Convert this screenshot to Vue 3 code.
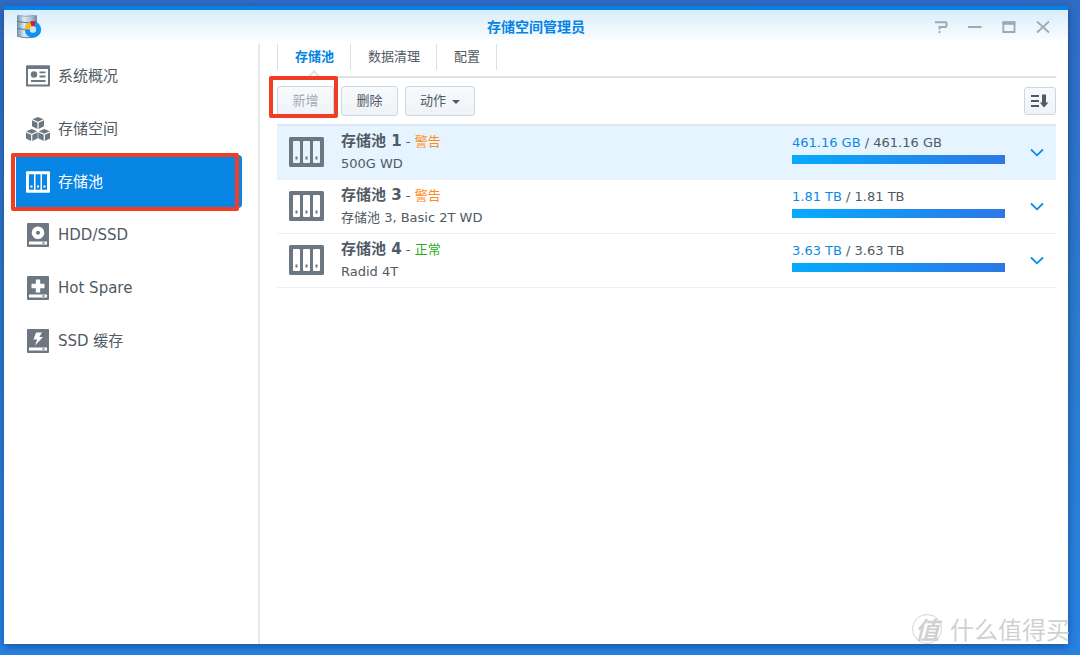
<script setup>
import { ref } from 'vue'

const nav = [
  { id: 'overview', label: '系统概况' },
  { id: 'volume', label: '存储空间' },
  { id: 'pool', label: '存储池' },
  { id: 'disk', label: 'HDD/SSD' },
  { id: 'spare', label: 'Hot Spare' },
  { id: 'cache', label: 'SSD 缓存' },
]
const current = ref('pool')

const tabs = ['存储池', '数据清理', '配置']
const tab = ref('存储池')

const pools = [
  { name: '存储池 1', status: '警告', level: 'warn', note: '500G WD', used: '461.16 GB', total: '461.16 GB', percent: 100 },
  { name: '存储池 3', status: '警告', level: 'warn', note: '存储池 3, Basic 2T WD', used: '1.81 TB', total: '1.81 TB', percent: 100 },
  { name: '存储池 4', status: '正常', level: 'ok', note: 'Radid 4T', used: '3.63 TB', total: '3.63 TB', percent: 100 },
]
const selected = ref('存储池 1')
</script>

<template>
  <div class="desktop">
    <div class="window">
      <header class="titlebar">
        <svg class="logo" viewBox="0 0 26 26" aria-hidden="true">
          <defs>
            <linearGradient id="metal" x1="0" x2="1" y1="0" y2="0">
              <stop offset="0" stop-color="#6f8fa8" />
              <stop offset="0.35" stop-color="#dcebf5" />
              <stop offset="0.7" stop-color="#a9c3d6" />
              <stop offset="1" stop-color="#68889f" />
            </linearGradient>
          </defs>
          <path d="M1 1.500Q11 -.5 21 1.500V22Q11 25.500 1 22Z" fill="url(#metal)" />
          <path d="M1 1.500Q11 3.500 21 1.500" fill="none" stroke="#8da8bb" stroke-width=".8" />
          <path d="M1 7.500Q11 10 21 7.500M1 14.500Q11 17 21 14.500" fill="none" stroke="#55758d" />
          <path d="M1 22Q11 25.500 21 22" fill="none" stroke="#6f8798" />
          <circle cx="17" cy="15.500" r="5.700" fill="none" stroke="#0b93f6" stroke-width="5" />
          <path d="M11.300 15.500A5.700 5.700 0 0 1 15 10.200" fill="none" stroke="#fcb813" stroke-width="5" />
          <path d="M15 10.200A5.700 5.700 0 0 1 19 10.200" fill="none" stroke="#e0182d" stroke-width="5" />
          <circle cx="17" cy="15.500" r="3.200" fill="#d3e0ea" />
        </svg>
        <h1>存储空间管理员</h1>
        <div class="controls">
          <button type="button" aria-label="帮助">
            <svg viewBox="0 0 14 14"><path d="M1 2.300H11.500Q12.500 2.300 12.500 3.300V6Q12.500 7 11.500 7H5.500V9.500M4.500 12H6.500" /></svg>
          </button>
          <button type="button" aria-label="最小化">
            <svg viewBox="0 0 14 14"><path d="M0 7H13.500" /></svg>
          </button>
          <button type="button" aria-label="最大化">
            <svg viewBox="0 0 14 14"><path d="M1.300 2.500V12H12.500V2.500Z" stroke-width="1.800" /><path d="M.5 3H13.400" stroke-width="3.500" /></svg>
          </button>
          <button type="button" aria-label="关闭">
            <svg viewBox="0 0 14 14"><path d="M1 1.500L13 12.500M13 1.500L1 12.500" stroke-width="1.700" /></svg>
          </button>
        </div>
      </header>

      <div class="body">
        <nav class="sidebar">
          <button
            v-for="item in nav"
            :key="item.id"
            type="button"
            class="nav-item"
            :class="{ active: current === item.id }"
            @click="current = item.id"
          >
            <svg v-if="item.id === 'overview'" viewBox="0 0 24 24">
              <path fill="currentColor" fill-rule="evenodd" d="M1 1.200H23Q24 1.200 24 2.200V21.500Q24 22.500 23 22.500H1Q0 22.500 0 21.500V2.200Q0 1.200 1 1.200ZM2 5V20.500H22V5Z" />
              <circle cx="8" cy="10.500" r="3.200" fill="currentColor" />
              <path stroke="currentColor" stroke-width="1.800" d="M13.500 8.300H19.500M13.500 12.500H19.500M5 17H19.500" />
            </svg>
            <svg v-else-if="item.id === 'volume'" viewBox="0 0 24 24">
              <g v-for="p in [[12, 0], [5.7, 12], [18.300, 12]]" :key="p[0]" :transform="`translate(${p[0]} ${p[1]})`" fill="currentColor">
                <path d="M0 0L5.500 2.300L0 4.800L-5.500 2.300Z" />
                <path d="M-6 3.300L-.6 5.800V12L-6 9.300Z" />
                <path d="M6 3.300L.6 5.800V12L6 9.300Z" />
              </g>
            </svg>
            <svg v-else-if="item.id === 'pool'" viewBox="0 0 24 24">
              <path fill="currentColor" fill-rule="evenodd" d="M1 1.300H23Q24 1.300 24 2.300V21.700Q24 22.700 23 22.700H1Q0 22.700 0 21.700V2.300Q0 1.300 1 1.300ZM3 4.300V19.700H8V4.300ZM9.500 4.300V19.700H14.500V4.300ZM16 4.300V19.700H21V4.300Z" />
              <path fill="currentColor" d="M4.500 15.500h2v2h-2zM11 15.500h2v2h-2zM17.500 15.500h2v2h-2z" />
            </svg>
            <svg v-else viewBox="0 0 24 24">
              <path fill="currentColor" d="M2 0H22Q23 0 23 1V23Q23 24 22 24H2Q1 24 1 23V1Q1 0 2 0Z" />
              <path fill="#fff" fill-rule="evenodd" d="M3 18.500H21V21.500H3ZM16.500 19.300V20.700H18.500V19.300Z" />
              <path v-if="item.id === 'disk'" fill="#fff" fill-rule="evenodd" d="M12 3.500A6.300 6.300 0 1 0 12 16.100A6.300 6.300 0 1 0 12 3.500ZM12 7.800A2 2 0 1 1 12 11.800A2 2 0 1 1 12 7.800Z" />
              <path v-else-if="item.id === 'spare'" fill="#fff" d="M9.800 3.500H14.200V7.800H18.500V12.200H14.200V16.500H9.800V12.200H5.500V7.800H9.800Z" />
              <path v-else fill="#fff" d="M10 3.500H16L13.300 8H17L9 16.500L11.200 10.500H7.500Z" />
            </svg>
            <span>{{ item.label }}</span>
          </button>
          <div class="mark mark-nav"></div>
        </nav>

        <main class="content">
          <div class="tabs" role="tablist">
            <button
              v-for="t in tabs"
              :key="t"
              type="button"
              role="tab"
              :aria-selected="tab === t"
              :class="{ active: tab === t }"
              @click="tab = t"
            >{{ t }}</button>
          </div>

          <div class="toolbar">
            <button type="button" class="btn" disabled>新增</button>
            <button type="button" class="btn">删除</button>
            <button type="button" class="btn">动作 <i class="caret"></i></button>
            <button type="button" class="btn sort" aria-label="排序">
              <svg viewBox="0 0 18 14">
                <path d="M0 2H8M0 7H8M0 12H8" stroke="currentColor" stroke-width="2" />
                <path d="M11 .5H15V8.500H17.500L13 13.500L8.800 8.500H11Z" fill="currentColor" />
              </svg>
            </button>
            <div class="mark mark-add"></div>
          </div>

          <ul class="pools">
            <li v-for="p in pools" :key="p.name" :class="{ selected: selected === p.name }" @click="selected = p.name">
              <svg class="pool-icon" viewBox="0 0 35 30">
                <path fill="currentColor" fill-rule="evenodd" d="M1.500 0H33.500Q35 0 35 1.500V28.500Q35 30 33.500 30H1.500Q0 30 0 28.500V1.500Q0 0 1.500 0ZM5 4Q4 4 4 5V25Q4 26 5 26H10Q11 26 11 25V5Q11 4 10 4ZM15 4Q14 4 14 5V25Q14 26 15 26H20Q21 26 21 25V5Q21 4 20 4ZM25 4Q24 4 24 5V25Q24 26 25 26H30Q31 26 31 25V5Q31 4 30 4Z" />
                <path fill="currentColor" d="M6.500 19.500h2v3h-2zM16.500 19.500h2v3h-2zM26.500 19.500h2v3h-2z" />
              </svg>
              <div class="info">
                <div class="name"><strong>{{ p.name }}</strong> - <span :class="p.level">{{ p.status }}</span></div>
                <div class="note">{{ p.note }}</div>
              </div>
              <div class="usage">
                <div><span class="used">{{ p.used }}</span> / {{ p.total }}</div>
                <div class="bar"><div class="fill" :style="{ width: p.percent + '%' }"></div></div>
              </div>
              <button type="button" class="expand" aria-label="展开">
                <svg viewBox="0 0 14 9"><path d="M1 1.500L7 7.300L13 1.500" fill="none" stroke="currentColor" stroke-width="1.800" /></svg>
              </button>
            </li>
          </ul>
        </main>
      </div>
    </div>
    <div class="watermark"><span class="seal">值</span><span>什么值得买</span></div>
  </div>
</template>

<style>
body {
  margin: 0;
}
</style>

<style scoped>
.desktop {
  position: relative;
  display: flex;
  box-sizing: border-box;
  min-height: 100vh;
  padding: 6px 12px 11px 4px;
  overflow: hidden;
  background: linear-gradient(to bottom, #306cc6, #2b7bce 50%, #2782e2);
  color: #505a64;
  font: 13px/20px "DejaVu Sans", "Noto Sans CJK SC", sans-serif;
}
button {
  margin: 0;
  padding: 0;
  border: 0;
  background: none;
  color: inherit;
  font: inherit;
}
svg {
  display: block;
}
.window {
  flex: 1;
  display: flex;
  flex-direction: column;
  background: #fff;
  border-top: 4px solid #0680e2;
  box-shadow: 0 2px 8px rgba(0, 20, 70, 0.45);
}
.titlebar {
  display: grid;
  grid-template-columns: 1fr auto 1fr;
  align-items: center;
  height: 34px;
  padding: 0 12px;
  background: linear-gradient(#d9ecfa, #fff);
}
.logo {
  width: 26px;
  height: 26px;
}
h1 {
  margin: 0;
  color: #0584e4;
  font-size: 14px;
  line-height: 20px;
}
.controls {
  display: flex;
  justify-content: flex-end;
  gap: 20px;
  padding-right: 6px;
}
.controls svg {
  width: 14px;
  height: 14px;
  fill: none;
  stroke: #9fa9b3;
  stroke-width: 2;
}
.body {
  flex: 1;
  display: flex;
}
.sidebar {
  position: relative;
  width: 254px;
  padding-top: 5px;
  border-right: 2px solid #e7e8ea;
  box-sizing: content-box;
}
.nav-item {
  display: flex;
  align-items: center;
  gap: 8px;
  width: 226px;
  height: 53px;
  margin-left: 12px;
  padding-left: 10px;
  border-radius: 0 4px 4px 0;
  font-size: 15px;
}
.nav-item svg {
  width: 24px;
  height: 24px;
  color: #6c7782;
}
.nav-item.active,
.nav-item.active svg {
  color: #fff;
}
.nav-item.active {
  background: #0786e6;
}
.mark {
  position: absolute;
  box-sizing: border-box;
  border: 4px solid #f03e24;
  border-radius: 2px;
  pointer-events: none;
}
.mark-nav {
  left: 7px;
  top: 109px;
  width: 228px;
  height: 58px;
}
.mark-add {
  left: -8px;
  top: -2px;
  width: 69px;
  height: 42px;
}
.content {
  flex: 1;
  padding: 0 12px 0 17px;
}
.tabs {
  display: flex;
  padding-bottom: 6px;
  border-bottom: 2px solid #dfe1e3;
}
.tabs button {
  position: relative;
  height: 26px;
  padding: 0 16px 0 17px;
  border-left: 1px solid #d5e0ea;
}
.tabs button:last-child {
  border-right: 1px solid #d5e0ea;
}
.tabs .active {
  color: #0584e4;
  font-weight: bold;
}
.tabs .active::after {
  content: "";
  position: absolute;
  left: 50%;
  bottom: -12px;
  width: 8px;
  height: 8px;
  margin-left: -5px;
  border: solid #dfe1e3;
  border-width: 2px 0 0 2px;
  background: #fff;
  transform: rotate(45deg);
}
.toolbar {
  position: relative;
  display: flex;
  align-items: center;
  gap: 7px;
  height: 46px;
}
.btn {
  box-sizing: border-box;
  height: 30px;
  min-width: 57px;
  padding: 0 14px;
  border: 1px solid #cbd7e1;
  border-radius: 3px;
  background: linear-gradient(#f8fafc, #eef3f8);
}
.btn:disabled {
  color: #a3a9b0;
}
.caret {
  display: inline-block;
  margin-left: 2px;
  vertical-align: 1px;
  border: 4px solid transparent;
  border-top-color: #505a64;
  border-bottom: 0;
}
.sort {
  min-width: 32px;
  width: 32px;
  height: 28px;
  margin-left: auto;
  padding: 0 6px;
}
.sort svg {
  width: 18px;
  height: 14px;
}
.pools {
  margin: 0;
  padding: 0;
  list-style: none;
  border-top: 2px solid #dfe9f2;
}
.pools li {
  display: flex;
  align-items: center;
  box-sizing: border-box;
  height: 54px;
  padding: 0 12px;
  border-bottom: 1px solid #eceff4;
}
.pools .selected {
  background: #e6f4ff;
}
.pool-icon {
  width: 35px;
  height: 30px;
  margin: 0 17px 2px 0;
  color: #6c7782;
}
.info {
  flex: 1;
}
.name,
.note {
  line-height: 22px;
}
.name strong {
  font-size: 15px;
}
.warn {
  color: #ff8c1a;
}
.ok {
  color: #2bab18;
}
.usage {
  width: 213px;
  margin: 0 25px 8px 0;
}
.used,
.expand {
  color: #0b8ae8;
}
.bar {
  height: 9px;
  margin-top: 2px;
  background: #e3e9ef;
}
.fill {
  height: 100%;
  background: linear-gradient(to right, #06aaff, #2d78e4);
}
.expand svg {
  width: 14px;
  height: 9px;
}
.watermark {
  position: absolute;
  right: 10px;
  bottom: 8px;
  display: flex;
  align-items: center;
  gap: 8px;
  color: rgba(200, 200, 200, 0.85);
  font-family: "Noto Sans CJK SC", sans-serif;
  font-size: 24px;
  line-height: 36px;
  pointer-events: none;
}
.seal {
  box-sizing: border-box;
  width: 30px;
  height: 30px;
  border: 1px solid #d4d4d4;
  border-radius: 50%;
  line-height: 27px;
  text-align: center;
  font-weight: bold;
  font-style: italic;
}
</style>
